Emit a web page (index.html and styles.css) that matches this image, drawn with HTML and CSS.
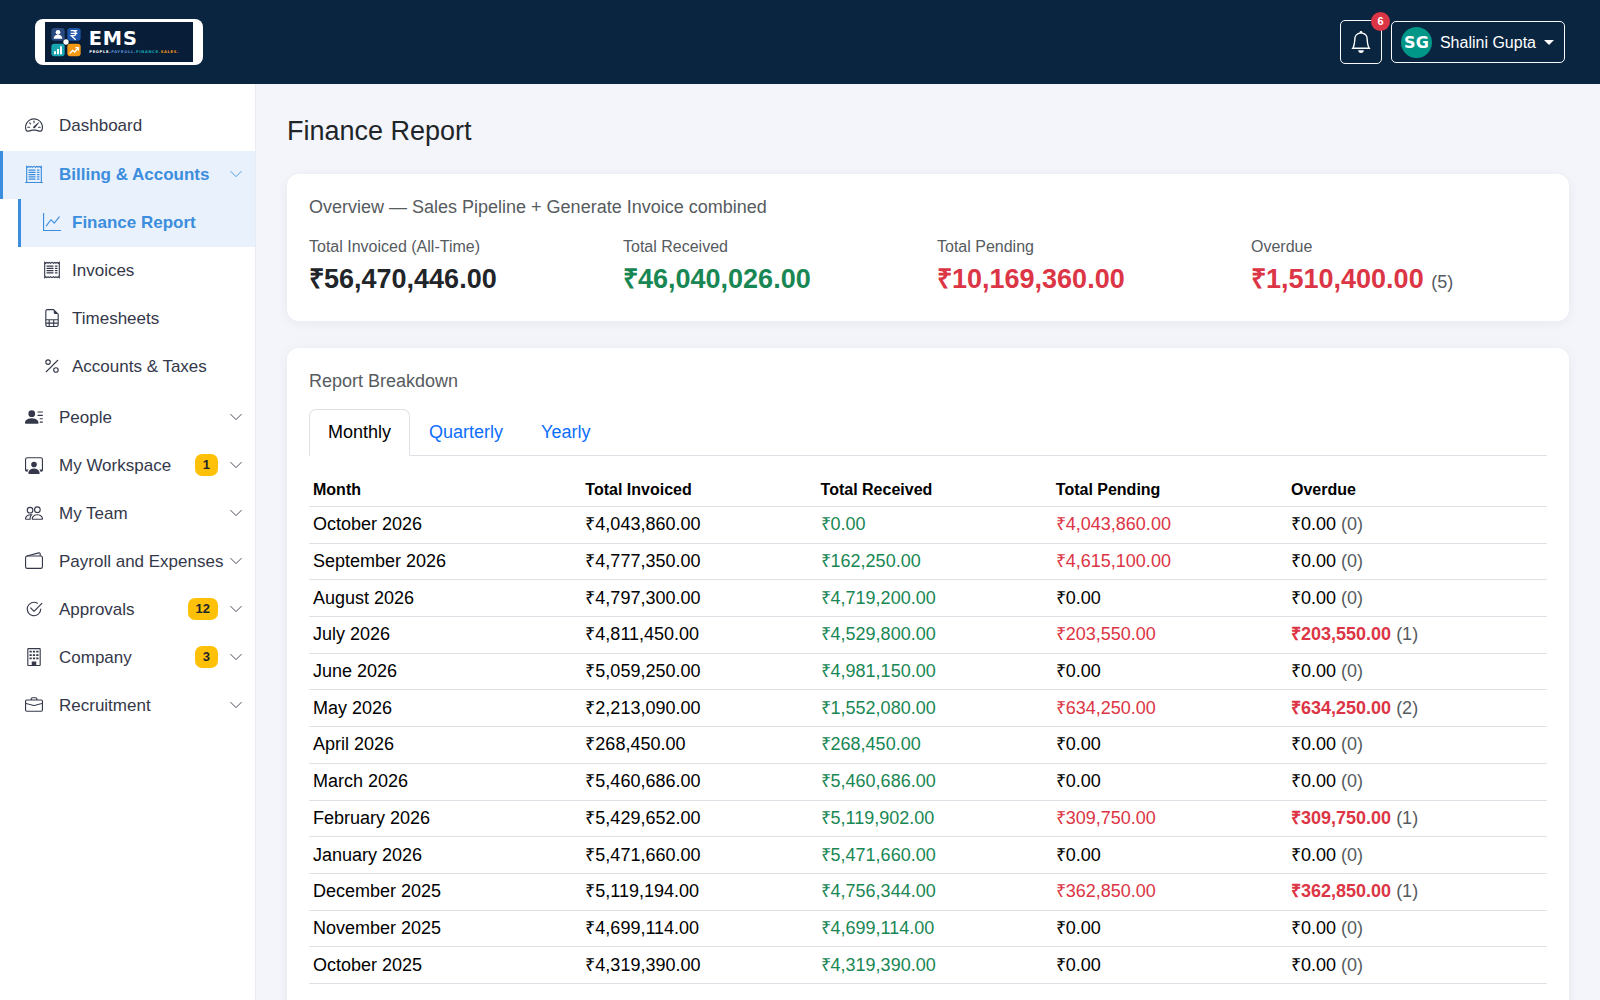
FILE: index.html
```html
<!DOCTYPE html>
<html lang="en">
<head>
<meta charset="utf-8">
<meta name="viewport" content="width=device-width, initial-scale=1">
<title>Finance Report - EMS</title>
<link rel="stylesheet" href="styles.css">
</head>
<body>
<svg class="sprite" aria-hidden="true">
  <symbol id="chevron" viewBox="0 0 16 16"><path d="M2 5l6 6 6-6" fill="none" stroke="currentColor" stroke-linecap="round" stroke-linejoin="round"/></symbol>
  <symbol id="receipt" viewBox="0 0 16 16"><path d="M1.5 1.2l1 .8 1-.8 1 .8 1-.8 1.2.8L8 1.2l1.3.8 1.2-.8 1 .8 1-.8 1 .8 1-.8v13.6l-1-.8-1 .8-1-.8-1 .8-1.2-.8-1.3.8-1.3-.8-1.2.8-1-.8-1 .8-1-.8-1 .8z" fill="none" stroke="currentColor"/><path d="M3.5 4.5H9m-5.500 2H9m-5.500 2H9m-5.500 2H9m2-6h1.500m-1.500 2h1.500m-1.500 2h1.500m-1.500 2h1.500" fill="none" stroke="currentColor" stroke-linecap="round"/></symbol>
  <symbol id="receipt-cutoff" viewBox="0 0 16 16"><path d="M1.500 15V1.200l1 .8 1-.8 1 .8 1-.8 1.200.8L8 1.200l1.300.8 1.200-.8 1 .8 1-.8 1 .8 1-.8V15M.5 15.500h15" fill="none" stroke="currentColor" stroke-linecap="round"/><path d="M3.500 4.500H9m-5.500 2H9m-5.500 2H9m-5.500 2H9m-5.500 2H9m2-8h1.500m-1.500 2h1.500m-1.500 2h1.500m-1.500 2h1.500m-1.500 2h1.500" fill="none" stroke="currentColor" stroke-linecap="round"/></symbol>
</svg>

<header class="topbar">
  <a class="brand" href="#" aria-label="EMS home">
    <svg class="brand-logo" viewBox="0 0 444 120">
      <rect width="444" height="120" fill="#071d38"/>
      <rect x="19" y="18" width="40" height="38" rx="9" fill="#2b4a80"/>
      <rect x="67" y="18" width="40" height="38" rx="9" fill="#1f55a8"/>
      <rect x="19" y="65" width="40" height="38" rx="9" fill="#18a5b0"/>
      <rect x="67" y="65" width="40" height="38" rx="9" fill="#f79a13"/>
      <circle cx="39" cy="31" r="7" fill="#fff"/>
      <path d="M26 50c0-8 5-12 13-12s13 4 13 12z" fill="#fff"/>
      <path d="M77 26h20M77 34h20M78 26h6c11 0 11 15 0 15h-5l13 12" fill="none" stroke="#fff" stroke-width="4"/>
      <path d="M27 88h6v9h-6zM36 81h6v16h-6zM45 73h6v24h-6z" fill="#fff"/>
      <path d="M74 95l9-10 6 5 11-13M91 77h9v9" fill="none" stroke="#fff" stroke-width="4"/>
      <circle cx="63" cy="60" r="8" fill="#fff"/>
      <text class="logo-name" x="131" y="70">EMS</text>
      <text class="logo-tag" x="133" y="93"><tspan fill="#fff">PEOPLE.</tspan><tspan fill="#5b8fd6">PAYROLL.</tspan><tspan fill="#18a5b0">FINANCE.</tspan><tspan fill="#f79a13">SALES.</tspan></text>
    </svg>
  </a>
  <div class="topbar-actions">
    <button class="bell" type="button" aria-label="Notifications">
      <svg class="bell-icon" viewBox="0 0 16 16" fill="currentColor"><path d="M8 16a2 2 0 0 0 2-2H6a2 2 0 0 0 2 2M8 1.918l-.797.161A4 4 0 0 0 4 6c0 .628-.134 2.197-.459 3.742-.16.767-.376 1.566-.663 2.258h10.244c-.287-.692-.502-1.490-.663-2.258C12.134 8.197 12 6.628 12 6a4 4 0 0 0-3.203-3.920zM14.220 12c.223.447.481.801.78 1H1c.299-.199.557-.553.78-1C2.680 10.200 3 6.880 3 6c0-2.420 1.720-4.440 4.005-4.901a1 1 0 1 1 1.990 0A5 5 0 0 1 13 6c0 .88.32 4.200 1.220 6"/></svg>
      <span class="bell-count">6</span>
    </button>
    <button class="account" type="button"><span class="avatar">SG</span><span>Shalini Gupta</span><span class="caret"></span></button>
  </div>
</header>

<div class="shell">
  <nav class="sidebar" aria-label="Main">
    <ul class="menu">
      <li><a class="item" href="#"><svg class="icon" viewBox="0 0 16 16"><path d="M8 4a.5.5 0 0 1 .5.5V6a.5.5 0 0 1-1 0V4.500A.5.5 0 0 1 8 4M3.732 5.732a.5.5 0 0 1 .707 0l.915.914a.5.5 0 1 1-.708.708l-.914-.915a.5.5 0 0 1 0-.707M2 10a.5.5 0 0 1 .5-.5h1.586a.5.5 0 0 1 0 1H2.500A.5.5 0 0 1 2 10m9.500 0a.5.5 0 0 1 .5-.5h1.500a.5.5 0 0 1 0 1H12a.5.5 0 0 1-.5-.5m.754-4.246a.39.39 0 0 0-.527-.02L7.547 9.310a.91.91 0 1 0 1.302 1.258l3.434-4.297a.39.39 0 0 0-.029-.518z"/><path fill-rule="evenodd" d="M0 10a8 8 0 1 1 15.547 2.661c-.442 1.253-1.845 1.602-2.932 1.250C11.309 13.488 9.475 13 8 13c-1.474 0-3.310.488-4.615.911-1.087.352-2.490.003-2.932-1.250A8 8 0 0 1 0 10m8-7a7 7 0 0 0-6.603 9.329c.203.575.923.876 1.680.63C4.397 12.533 6.358 12 8 12s3.604.532 4.923.96c.757.245 1.477-.056 1.680-.631A7 7 0 0 0 8 3"/></svg><span class="label">Dashboard</span></a></li>
      <li>
        <a class="item active" href="#"><svg class="icon"><use href="#receipt-cutoff"/></svg><span class="label">Billing &amp; Accounts</span><svg class="chevron"><use href="#chevron"/></svg></a>
        <ul class="submenu">
          <li><a class="item active" href="#" aria-current="page"><svg class="icon" viewBox="0 0 16 16"><path fill-rule="evenodd" d="M0 0h1v15h15v1H0zm14.817 3.113a.5.5 0 0 1 .07.704l-4.500 5.500a.5.5 0 0 1-.74.037L7.060 6.767l-3.656 5.027a.5.5 0 0 1-.808-.588l4-5.500a.5.5 0 0 1 .758-.06l2.609 2.610 4.150-5.073a.5.5 0 0 1 .704-.07"/></svg><span class="label">Finance Report</span></a></li>
          <li><a class="item" href="#"><svg class="icon"><use href="#receipt"/></svg><span class="label">Invoices</span></a></li>
          <li><a class="item" href="#"><svg class="icon" viewBox="0 0 16 16"><path d="M14 14V4.500L9.500 0H4a2 2 0 0 0-2 2v12a2 2 0 0 0 2 2h8a2 2 0 0 0 2-2M9.500 3A1.500 1.500 0 0 0 11 4.500h2V9H3V2a1 1 0 0 1 1-1h5.500zM3 12v-2h2v2zm0 1h2v2H4a1 1 0 0 1-1-1zm3 2v-2h3v2zm4 0v-2h3v1a1 1 0 0 1-1 1zm3-3h-3v-2h3zm-7 0v-2h3v2z"/></svg><span class="label">Timesheets</span></a></li>
          <li><a class="item" href="#"><svg class="icon" viewBox="0 0 16 16"><path d="M13.442 2.558a.625.625 0 0 1 0 .884l-10 10a.625.625 0 1 1-.884-.884l10-10a.625.625 0 0 1 .884 0M4.500 6a1.500 1.500 0 1 1 0-3 1.500 1.500 0 0 1 0 3m0 1a2.500 2.500 0 1 0 0-5 2.500 2.500 0 0 0 0 5m7 6a1.500 1.500 0 1 1 0-3 1.500 1.500 0 0 1 0 3m0 1a2.500 2.500 0 1 0 0-5 2.500 2.500 0 0 0 0 5"/></svg><span class="label">Accounts &amp; Taxes</span></a></li>
        </ul>
      </li>
      <li><a class="item" href="#"><svg class="icon" viewBox="0 0 16 16"><path d="M6 8a3 3 0 1 0 0-6 3 3 0 0 0 0 6m-5 6s-1 0-1-1 1-4 6-4 6 3 6 4-1 1-1 1zM11 3.500a.5.5 0 0 1 .5-.5h4a.5.5 0 0 1 0 1h-4a.5.5 0 0 1-.5-.5m.5 2.500a.5.5 0 0 0 0 1h4a.5.5 0 0 0 0-1zm2 3a.5.5 0 0 0 0 1h2a.5.5 0 0 0 0-1zm0 3a.5.5 0 0 0 0 1h2a.5.5 0 0 0 0-1z"/></svg><span class="label">People</span><svg class="chevron"><use href="#chevron"/></svg></a></li>
      <li><a class="item" href="#"><svg class="icon" viewBox="0 0 16 16"><path d="M4 16s-1 0-1-1 1-4 5-4 5 3 5 4-1 1-1 1zm4-5.950a2.500 2.500 0 1 0 0-5 2.500 2.500 0 0 0 0 5"/><path d="M2 1a2 2 0 0 0-2 2v9.500A1.500 1.500 0 0 0 1.500 14h.653a5.400 5.400 0 0 1 1.066-2H1V3a1 1 0 0 1 1-1h12a1 1 0 0 1 1 1v9h-2.219c.554.654.89 1.373 1.066 2h.653a1.500 1.500 0 0 0 1.500-1.500V3a2 2 0 0 0-2-2z"/></svg><span class="label">My Workspace</span><span class="badge">1</span><svg class="chevron"><use href="#chevron"/></svg></a></li>
      <li><a class="item" href="#"><svg class="icon" viewBox="0 0 16 16"><path d="M15 14s1 0 1-1-1-4-5-4-5 3-5 4 1 1 1 1zm-7.978-1L7 12.996c.001-.264.167-1.030.76-1.720C8.312 10.629 9.282 10 11 10c1.717 0 2.687.63 3.240 1.276.593.69.758 1.457.76 1.720l-.008.002-.014.002zM11 7a2 2 0 1 0 0-4 2 2 0 0 0 0 4m3-2a3 3 0 1 1-6 0 3 3 0 0 1 6 0M6.936 9.280a6 6 0 0 0-1.230-.247A7 7 0 0 0 5 9c-4 0-5 3-5 4q0 1 1 1h4.216A2.240 2.240 0 0 1 5 13c0-1.010.377-2.042 1.090-2.904.243-.294.526-.569.846-.816M4.920 10A5.500 5.500 0 0 0 4 13H1c0-.26.164-1.030.76-1.724.545-.636 1.492-1.256 3.160-1.275ZM1.500 5.500a3 3 0 1 1 6 0 3 3 0 0 1-6 0m3-2a2 2 0 1 0 0 4 2 2 0 0 0 0-4"/></svg><span class="label">My Team</span><svg class="chevron"><use href="#chevron"/></svg></a></li>
      <li><a class="item" href="#"><svg class="icon" viewBox="0 0 16 16"><rect x=".5" y="3.500" width="15" height="11" rx="1.500" fill="none" stroke="currentColor"/><path d="M1.500 3.500L12.300.8q1.200-.2 1.200 1v1.700" fill="none" stroke="currentColor"/></svg><span class="label">Payroll and Expenses</span><svg class="chevron"><use href="#chevron"/></svg></a></li>
      <li><a class="item" href="#"><svg class="icon" viewBox="0 0 16 16"><path d="M2.500 8a5.500 5.500 0 0 1 8.250-4.764.5.5 0 0 0 .5-.866A6.500 6.500 0 1 0 14.500 8a.5.5 0 0 0-1 0 5.500 5.500 0 1 1-11 0"/><path d="M15.354 3.354a.5.5 0 0 0-.708-.708L8 9.293 5.354 6.646a.5.5 0 1 0-.708.708l3 3a.5.5 0 0 0 .708 0z"/></svg><span class="label">Approvals</span><span class="badge">12</span><svg class="chevron"><use href="#chevron"/></svg></a></li>
      <li><a class="item" href="#"><svg class="icon" viewBox="0 0 16 16"><path d="M3 0a1 1 0 0 0-1 1v14a1 1 0 0 0 1 1h10a1 1 0 0 0 1-1V1a1 1 0 0 0-1-1zm0 1h10v14H3z" fill-rule="evenodd"/><path d="M4 2.500h2v1.500H4zM7 2.500h2v1.500H7zM10 2.500h2v1.500h-2zM4 5.500h2V7H4zM7 5.500h2V7H7zM10 5.500h2V7h-2zM4 8.500h2V10H4zM7 8.500h2V10H7zM10 8.500h2V10h-2zM6 12h4v3H6z"/></svg><span class="label">Company</span><span class="badge">3</span><svg class="chevron"><use href="#chevron"/></svg></a></li>
      <li><a class="item" href="#"><svg class="icon" viewBox="0 0 16 16"><path d="M6.500 1A1.500 1.500 0 0 0 5 2.500V3H1.500A1.500 1.500 0 0 0 0 4.500v8A1.500 1.500 0 0 0 1.500 14h13a1.500 1.500 0 0 0 1.500-1.500v-8A1.500 1.500 0 0 0 14.500 3H11v-.5A1.500 1.500 0 0 0 9.500 1zm0 1h3a.5.5 0 0 1 .5.5V3H6v-.5a.5.5 0 0 1 .5-.5m1.886 6.914L15 7.151V12.500a.5.5 0 0 1-.5.5h-13a.5.5 0 0 1-.5-.5V7.150l6.614 1.764a1.500 1.500 0 0 0 .772 0M1.500 4h13a.5.5 0 0 1 .5.5v1.616L8.129 7.948a.5.5 0 0 1-.258 0L1 6.116V4.500a.5.5 0 0 1 .5-.5"/></svg><span class="label">Recruitment</span><svg class="chevron"><use href="#chevron"/></svg></a></li>
    </ul>
  </nav>

  <main class="content">
    <h1 class="page-title">Finance Report</h1>

    <section class="card">
      <h2 class="card-title">Overview — Sales Pipeline + Generate Invoice combined</h2>
      <dl class="stats">
        <div><dt>Total Invoiced (All-Time)</dt><dd>₹56,470,446.00</dd></div>
        <div><dt>Total Received</dt><dd class="green">₹46,040,026.00</dd></div>
        <div><dt>Total Pending</dt><dd class="red">₹10,169,360.00</dd></div>
        <div><dt>Overdue</dt><dd class="red">₹1,510,400.00 <span class="count">(5)</span></dd></div>
      </dl>
    </section>

    <section class="card">
      <h2 class="card-title">Report Breakdown</h2>
      <div class="tabs" role="tablist">
        <button class="tab selected" type="button" role="tab" aria-selected="true">Monthly</button>
        <button class="tab" type="button" role="tab" aria-selected="false">Quarterly</button>
        <button class="tab" type="button" role="tab" aria-selected="false">Yearly</button>
      </div>
      <table class="report">
        <colgroup><col class="col-month"><col class="col-sum"><col class="col-sum"><col class="col-sum"><col></colgroup>
        <thead><tr><th scope="col">Month</th><th scope="col">Total Invoiced</th><th scope="col">Total Received</th><th scope="col">Total Pending</th><th scope="col">Overdue</th></tr></thead>
        <tbody>
          <tr><td>October 2026</td><td>₹4,043,860.00</td><td class="green">₹0.00</td><td class="red">₹4,043,860.00</td><td>₹0.00 <span class="count">(0)</span></td></tr>
          <tr><td>September 2026</td><td>₹4,777,350.00</td><td class="green">₹162,250.00</td><td class="red">₹4,615,100.00</td><td>₹0.00 <span class="count">(0)</span></td></tr>
          <tr><td>August 2026</td><td>₹4,797,300.00</td><td class="green">₹4,719,200.00</td><td>₹0.00</td><td>₹0.00 <span class="count">(0)</span></td></tr>
          <tr><td>July 2026</td><td>₹4,811,450.00</td><td class="green">₹4,529,800.00</td><td class="red">₹203,550.00</td><td><strong class="red">₹203,550.00</strong> <span class="count">(1)</span></td></tr>
          <tr><td>June 2026</td><td>₹5,059,250.00</td><td class="green">₹4,981,150.00</td><td>₹0.00</td><td>₹0.00 <span class="count">(0)</span></td></tr>
          <tr><td>May 2026</td><td>₹2,213,090.00</td><td class="green">₹1,552,080.00</td><td class="red">₹634,250.00</td><td><strong class="red">₹634,250.00</strong> <span class="count">(2)</span></td></tr>
          <tr><td>April 2026</td><td>₹268,450.00</td><td class="green">₹268,450.00</td><td>₹0.00</td><td>₹0.00 <span class="count">(0)</span></td></tr>
          <tr><td>March 2026</td><td>₹5,460,686.00</td><td class="green">₹5,460,686.00</td><td>₹0.00</td><td>₹0.00 <span class="count">(0)</span></td></tr>
          <tr><td>February 2026</td><td>₹5,429,652.00</td><td class="green">₹5,119,902.00</td><td class="red">₹309,750.00</td><td><strong class="red">₹309,750.00</strong> <span class="count">(1)</span></td></tr>
          <tr><td>January 2026</td><td>₹5,471,660.00</td><td class="green">₹5,471,660.00</td><td>₹0.00</td><td>₹0.00 <span class="count">(0)</span></td></tr>
          <tr><td>December 2025</td><td>₹5,119,194.00</td><td class="green">₹4,756,344.00</td><td class="red">₹362,850.00</td><td><strong class="red">₹362,850.00</strong> <span class="count">(1)</span></td></tr>
          <tr><td>November 2025</td><td>₹4,699,114.00</td><td class="green">₹4,699,114.00</td><td>₹0.00</td><td>₹0.00 <span class="count">(0)</span></td></tr>
          <tr><td>October 2025</td><td>₹4,319,390.00</td><td class="green">₹4,319,390.00</td><td>₹0.00</td><td>₹0.00 <span class="count">(0)</span></td></tr>
        </tbody>
      </table>
    </section>
  </main>
</div>
</body>
</html>
```

FILE: styles.css
```css
*,
*::before,
*::after {
  box-sizing: border-box;
}

html,
body {
  height: 100%;
}

body {
  margin: 0;
  display: flex;
  flex-direction: column;
  overflow: hidden;
  background: #f3f5fa;
  color: #212529;
  font: 18px/27px "Liberation Sans", Arial, sans-serif;
}

button {
  font: inherit;
  cursor: pointer;
}

.sprite {
  display: none;
}

/* Top bar */
.topbar {
  flex: none;
  display: flex;
  align-items: center;
  justify-content: space-between;
  height: 84px;
  padding: 0 35px;
  background: #0a2540;
}

.brand {
  padding: 3px 10px;
  border-radius: 8px;
  background: #fff;
}

.brand-logo {
  display: block;
  width: 148px;
  height: 40px;
}

.logo-name,
.logo-tag {
  font-family: "DejaVu Sans", Verdana, sans-serif;
  font-weight: 700;
}

.logo-name {
  font-size: 58px;
  letter-spacing: 3px;
  fill: #fff;
}

.logo-tag {
  font-size: 11px;
  letter-spacing: 2px;
}

.topbar-actions {
  display: flex;
  align-items: center;
  gap: 9px;
}

.bell,
.account {
  display: flex;
  align-items: center;
  border: 1px solid #f8f9fa;
  border-radius: 5px;
  background: none;
  color: #fff;
}

.bell {
  position: relative;
  justify-content: center;
  width: 42px;
  height: 44px;
  padding: 0;
}

.bell-icon {
  width: 22px;
  height: 22px;
}

.bell-count {
  position: absolute;
  top: -9px;
  right: -9px;
  width: 19px;
  border-radius: 10px;
  background: #dc3545;
  font-size: 11px;
  font-weight: 700;
  line-height: 19px;
}

.account {
  gap: 8px;
  height: 42px;
  padding: 0 10px 0 9px;
  font-size: 16px;
}

.avatar {
  width: 31px;
  border-radius: 50%;
  background: #009688;
  font: 700 16px/31px "DejaVu Sans", Verdana, sans-serif;
}

.caret {
  border: 5px solid transparent;
  border-top-color: currentColor;
  border-bottom: 0;
}

/* Layout */
.shell {
  flex: 1;
  min-height: 0;
  display: flex;
}

.sidebar {
  flex: none;
  width: 256px;
  padding-top: 18px;
  overflow: auto;
  border-right: 1px solid #e9ecf3;
  background: #fff;
}

.content {
  flex: 1;
  min-width: 0;
  padding: 31px;
  overflow: auto;
  scrollbar-width: none;
}

/* Sidebar menu */
.menu,
.submenu {
  margin: 0;
  padding: 0;
  list-style: none;
}

.menu > li:first-child {
  margin-bottom: 1px;
}

.submenu {
  padding: 0 0 3px 18px;
}

.item {
  display: flex;
  align-items: center;
  height: 48px;
  padding: 0 12px 2px 22px;
  border-left: 3px solid transparent;
  color: #34384a;
  font-size: 17px;
  text-decoration: none;
  white-space: nowrap;
}

.item.active {
  border-left-color: #3b8ddd;
  background: #e9f1fc;
  color: #3b8ddd;
  font-weight: 700;
}

.icon {
  flex: none;
  width: 18px;
  height: 18px;
  margin-right: 16px;
  fill: currentColor;
}

.submenu .icon {
  margin-right: 11px;
}

.label {
  flex: 1;
}

.badge {
  margin-right: 11px;
  padding: 0 8px;
  border-radius: 7px;
  background: #ffc107;
  color: #212529;
  font-size: 13px;
  font-weight: 700;
  line-height: 22px;
}

.chevron {
  flex: none;
  width: 14px;
  height: 14px;
}

/* Cards */
.page-title {
  margin: 0 0 27px;
  font-size: 27px;
  font-weight: 400;
  line-height: 32px;
}

.card {
  margin-bottom: 27px;
  padding: 22px;
  border-radius: 12px;
  background: #fff;
  box-shadow: 0 2px 12px rgba(20, 30, 60, 0.06);
}

.card-title {
  margin: 0 0 17px;
  color: #565b60;
  font-size: 18px;
  font-weight: 400;
  line-height: 22px;
}

.stats {
  display: grid;
  grid-template-columns: repeat(4, 1fr);
  gap: 18px;
  margin: 0;
  padding-bottom: 4px;
}

.stats dt {
  margin-bottom: 4px;
  color: #565b60;
  font-size: 16px;
  line-height: 24px;
}

.stats dd {
  margin: 0;
  font-size: 27px;
  font-weight: 700;
  line-height: 32px;
}

.count {
  color: #565b60;
  font-size: 18px;
  font-weight: 400;
  line-height: 18px;
}

.green {
  color: #198754;
}

.red {
  color: #dc3545;
}

/* Tabs */
.tabs {
  display: flex;
  margin-bottom: 18px;
  border-bottom: 1px solid #dee2e6;
}

.tab {
  margin-bottom: -1px;
  padding: 9px 18px;
  border: 1px solid transparent;
  border-radius: 7px 7px 0 0;
  background: none;
  color: #0d6efd;
  line-height: 27px;
}

.tab.selected {
  border-color: #dee2e6 #dee2e6 #fff;
  background: #fff;
  color: #000;
}

/* Report table */
.report {
  width: 100%;
  height: 510px;
  margin-bottom: 18px;
  table-layout: fixed;
  border-spacing: 0;
  color: #000;
}

.col-month {
  width: 22%;
}

.col-sum {
  width: 19%;
}

.report th,
.report td {
  padding: 4px;
  border-bottom: 1px solid #dee2e6;
  text-align: left;
}

.report th {
  font-size: 16px;
  line-height: 24px;
}
```
